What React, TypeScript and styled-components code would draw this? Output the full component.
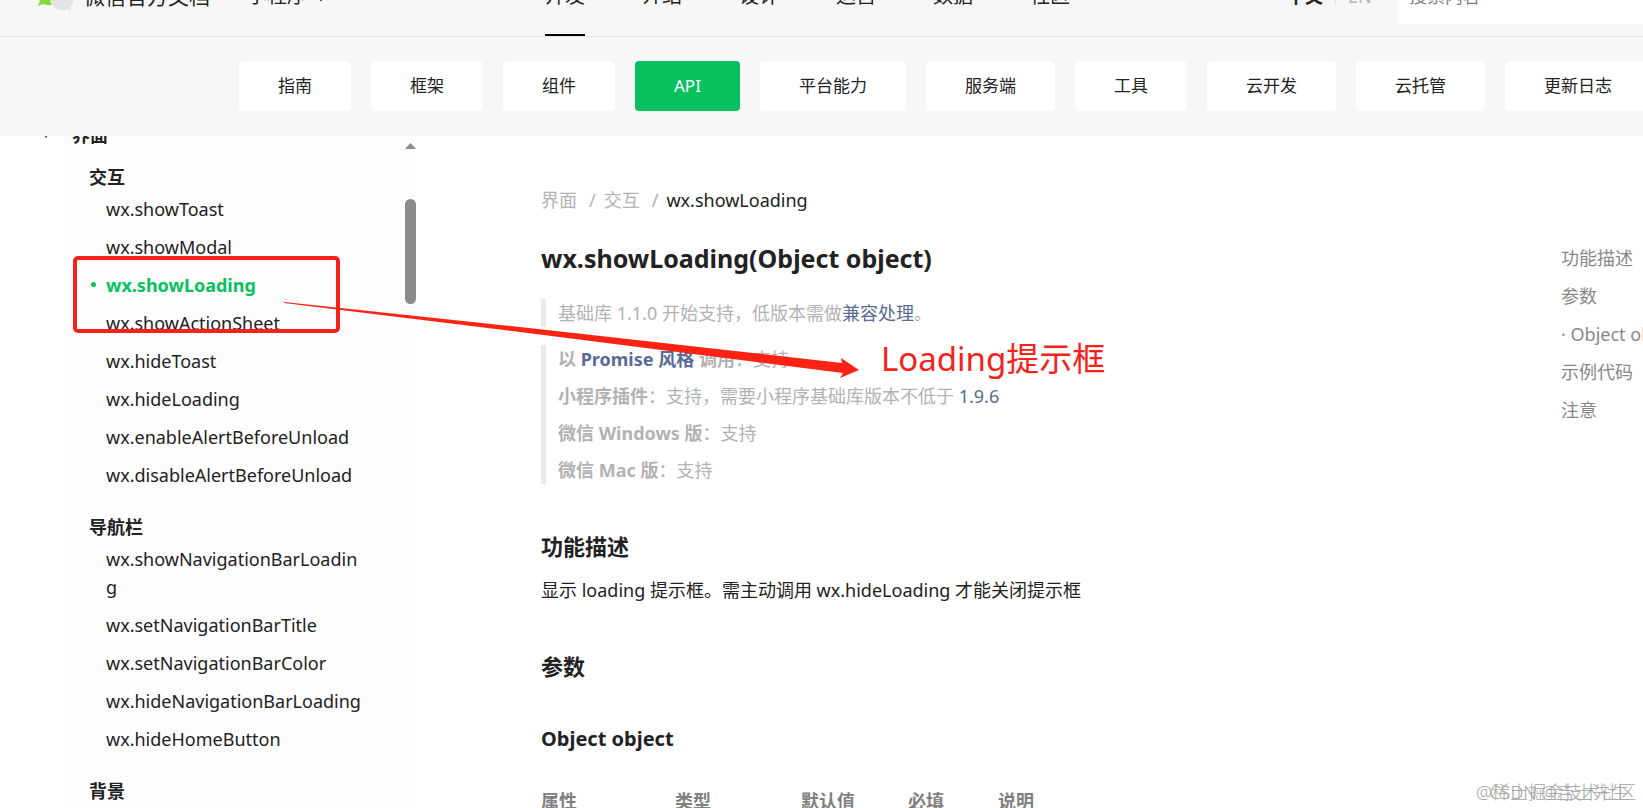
import React from 'react';
import styled, { createGlobalStyle } from 'styled-components';

const GlobalStyle = createGlobalStyle`
  * { box-sizing: border-box; }
  html, body, #root { height: 100%; }
  body {
    margin: 0;
    background: #fff;
    color: #222;
    font-family: "Noto Sans", "Noto Sans CJK SC", sans-serif;
    font-size: 18px;
    line-height: 28px;
    overflow: hidden;
  }
  a { color: inherit; text-decoration: none; }
  h1, h2, h3, p, ul { margin: 0; padding: 0; }
  ul { list-style: none; }
`;

const Page = styled.div`
  position: relative;
  display: flex;
  flex-direction: column;
  height: 100vh;
  overflow: hidden;
`;

const Header = styled.header`
  flex: none;
  display: flex;
  align-items: flex-end;
  height: 37px;
  overflow: hidden;
  background: #f7f7f7;
  border-bottom: 1px solid #e6e6e6;
`;

const HeaderRow = styled.div`
  flex: 1;
  display: flex;
  align-items: center;
  height: 80px;
  padding-left: 36px;
  font-size: 20px;
`;

const Brand = styled.a`
  display: flex;
  align-items: center;
  gap: 8px;
  width: 211px;
  font-size: 21px;
`;

const Product = styled.button`
  display: flex;
  align-items: center;
  gap: 8px;
  width: 298px;
  padding: 0;
  border: 0;
  background: none;
  color: inherit;
  font: inherit;
`;

const MainNav = styled.nav`
  display: flex;
  gap: 57px;
  width: 742px;
  height: 100%;
`;

const NavLink = styled.a<{ $active?: boolean }>`
  display: flex;
  align-items: center;
  border-bottom: 2px solid ${p => (p.$active ? '#000' : 'transparent')};
  border-top: 2px solid transparent;
`;

const Languages = styled.div`
  display: flex;
  align-items: center;
  gap: 12px;
  width: 110px;
  font-size: 18px;
  color: #b2b2b2;
`;

const Language = styled.a<{ $active?: boolean }>`
  font-weight: ${p => (p.$active ? 700 : 400)};
  color: ${p => (p.$active ? '#222' : '#b2b2b2')};
`;

const Separator = styled.span`
  width: 1px;
  height: 18px;
  background: #e2e2e2;
`;

const Search = styled.input`
  flex: 1;
  min-width: 0;
  height: 56px;
  padding: 0 12px;
  border: 0;
  border-radius: 4px;
  background: #fff;
  font: inherit;
  font-size: 18px;
  &::placeholder { color: #808080; opacity: 1; }
`;

const TabBar = styled.nav`
  flex: none;
  display: flex;
  gap: 20px;
  padding: 24px 0 25px 239px;
  overflow: hidden;
  background: #f7f7f7;
  font-size: 17px;
`;

const Tab = styled.a<{ $active?: boolean }>`
  flex: none;
  padding: 11px 39px;
  border-radius: 4px;
  background: ${p => (p.$active ? '#07c160' : '#fff')};
  color: ${p => (p.$active ? '#fff' : '#222')};
`;

const Body = styled.div`
  flex: 1;
  display: flex;
  min-height: 0;
  overflow: hidden;
`;

const Sidebar = styled.aside`
  flex: none;
  display: flex;
  justify-content: space-between;
  width: 352px;
  margin-left: 64px;
  background: #fdfdfd;
`;

const SideMenu = styled.div`
  width: 300px;
  margin-top: -15px;
  padding-left: 8px;
`;

const SideRoot = styled.h2`
  position: relative;
  font-size: 18px;
  line-height: 28px;
  svg {
    position: absolute;
    left: -30px;
    top: 9px;
  }
`;

const SideHeading = styled.h3`
  padding: 14px 0 4px 17px;
  font-size: 18px;
  line-height: 28px;
`;

const SideItem = styled.li<{ $active?: boolean }>`
  position: relative;
  margin-bottom: 10px;
  padding-left: 34px;
  word-break: break-all;
  font-weight: ${p => (p.$active ? 700 : 400)};
  color: ${p => (p.$active ? '#07c160' : '#222')};
  &::before {
    content: '';
    display: ${p => (p.$active ? 'block' : 'none')};
    position: absolute;
    left: 19px;
    top: 11px;
    width: 5px;
    height: 5px;
    border-radius: 50%;
    background: #07c160;
  }
`;

const ScrollTrack = styled.div`
  display: flex;
  flex-direction: column;
  align-items: center;
  width: 11px;
  padding-top: 7px;
`;

const ScrollThumb = styled.div`
  width: 11px;
  height: 105px;
  margin-top: 50px;
  border-radius: 6px;
  background: #8b8b8b;
`;

const Article = styled.main`
  flex: 1;
  min-width: 0;
  padding: 50px 0 0 125px;
`;

const Crumbs = styled.nav`
  display: flex;
  gap: 8px;
  color: #b2b2b2;
  strong { font-weight: 400; color: #222; }
  span { padding-left: 4px; }
`;

const Title = styled.h1`
  margin-top: 26px;
  font-size: 25px;
  line-height: 36px;
`;

const Quote = styled.blockquote<{ $gap: number }>`
  display: flex;
  flex-direction: column;
  gap: 9px;
  margin: ${p => p.$gap}px 0 0;
  padding-left: 12px;
  border-left: 5px solid #eaeaea;
  color: #b2b2b2;
  a { color: #576b95; }
`;

const SectionTitle = styled.h2`
  margin-top: 46px;
  font-size: 22px;
  line-height: 32px;
`;

const Paragraph = styled.p`
  margin: 14px 0 0;
`;

const SubTitle = styled.h3`
  margin-top: 43px;
  font-size: 20px;
  line-height: 28px;
`;

const ParamTable = styled.table`
  margin-top: 34px;
  border-collapse: collapse;
  color: #808080;
  th { padding: 0; text-align: left; font-weight: 700; }
`;

const Toc = styled.nav`
  flex: none;
  width: 82px;
  padding-top: 108px;
  display: flex;
  flex-direction: column;
  gap: 10px;
  white-space: nowrap;
  color: #888;
`;

const Marks = styled.svg`
  position: absolute;
  left: 0;
  top: 0;
  width: 900px;
  height: 400px;
  pointer-events: none;
`;

const Callout = styled.div`
  position: absolute;
  left: 881px;
  top: 335px;
  font-size: 33px;
  line-height: 48px;
  color: #f5221b;
`;

const Watermark = styled.div<{ $right: number }>`
  position: absolute;
  right: ${p => p.$right}px;
  bottom: 2px;
  font-size: 18px;
  font-weight: 300;
  color: #a4a4a4;
`;

const tabs = ['指南', '框架', '组件', 'API', '平台能力', '服务端', '工具', '云开发', '云托管', '更新日志'];
const nav = ['开发', '介绍', '设计', '运营', '数据', '社区'];
const groups = [
  {
    title: '交互',
    items: ['showToast', 'showModal', 'showLoading', 'showActionSheet', 'hideToast', 'hideLoading', 'enableAlertBeforeUnload', 'disableAlertBeforeUnload'],
  },
  {
    title: '导航栏',
    items: ['showNavigationBarLoading', 'setNavigationBarTitle', 'setNavigationBarColor', 'hideNavigationBarLoading', 'hideHomeButton'],
  },
  { title: '背景', items: [] },
];
const columns: [string, number][] = [['属性', 134], ['类型', 126], ['默认值', 107], ['必填', 90], ['说明', 90]];
const toc = ['功能描述', '参数', '· Object object', '示例代码', '注意'];

export default function App() {
  return (
    <Page>
      <GlobalStyle />
      <Header>
        <HeaderRow>
          <Brand href="#">
            <svg width="40" height="32" viewBox="0 0 40 32">
              <path d="M15 0C7 0 0 5 0 12c0 4 2 7 4 9L2 26l5-2c3 1 5 1 8 1 8 0 15-5 15-12S23 0 15 0z" fill="#82d93c" />
              <path d="M26 8c-7 0-12 5-12 11s5 11 12 11c2 0 4 0 5-1l4 2-1-4c2-2 4-5 4-8 0-6-5-11-12-11z" fill="#e3e4e8" />
            </svg>
            微信官方文档
          </Brand>
          <Product type="button">
            小程序
            <svg width="12" height="12" viewBox="0 0 12 12">
              <path d="M1 5l5 6 5-6" fill="none" stroke="#444" strokeWidth="1" />
            </svg>
          </Product>
          <MainNav>
            {nav.map((n, i) => <NavLink key={n} href="#" $active={i === 0}>{n}</NavLink>)}
          </MainNav>
          <Languages>
            <Language href="#" $active>中文</Language>
            <Separator />
            <Language href="#">EN</Language>
          </Languages>
          <Search type="search" aria-label="搜索内容" placeholder="搜索内容" />
        </HeaderRow>
      </Header>
      <TabBar>
        {tabs.map(t => <Tab key={t} href="#" $active={t === 'API'}>{t}</Tab>)}
      </TabBar>
      <Body>
        <Sidebar>
          <SideMenu>
            <SideRoot>
              <svg width="8" height="8" viewBox="0 0 8 8"><path d="M0 2h8L4 8z" fill="#444" /></svg>
              界面
            </SideRoot>
            {groups.map(g => (
              <section key={g.title}>
                <SideHeading>{g.title}</SideHeading>
                <ul>
                  {g.items.map(i => (
                    <SideItem key={i} $active={i === 'showLoading'}><a href="#">{'wx.' + i}</a></SideItem>
                  ))}
                </ul>
              </section>
            ))}
          </SideMenu>
          <ScrollTrack>
            <svg width="11" height="6" viewBox="0 0 11 6"><path d="M5.500 0L11 6H0z" fill="#8b8b8b" /></svg>
            <ScrollThumb />
          </ScrollTrack>
        </Sidebar>
        <Article>
          <Crumbs>
            <a href="#">界面</a><span>/</span><a href="#">交互</a><span>/</span><strong>wx.showLoading</strong>
          </Crumbs>
          <Title>wx.showLoading(Object object)</Title>
          <Quote $gap={23}>
            <p>基础库 1.1.0 开始支持，低版本需做<a href="#">兼容处理</a>。</p>
          </Quote>
          <Quote $gap={18}>
            <p><b>以 <a href="#">Promise 风格</a> 调用</b>：支持</p>
            <p><b>小程序插件</b>：支持，需要小程序基础库版本不低于 <a href="#">1.9.6</a></p>
            <p><b>微信 Windows 版</b>：支持</p>
            <p><b>微信 Mac 版</b>：支持</p>
          </Quote>
          <SectionTitle>功能描述</SectionTitle>
          <Paragraph>显示 loading 提示框。需主动调用 wx.hideLoading 才能关闭提示框</Paragraph>
          <SectionTitle>参数</SectionTitle>
          <SubTitle>Object object</SubTitle>
          <ParamTable>
            <colgroup>{columns.map(([c, w]) => <col key={c} width={w} />)}</colgroup>
            <thead><tr>{columns.map(([c]) => <th key={c} scope="col">{c}</th>)}</tr></thead>
          </ParamTable>
        </Article>
        <Toc>{toc.map(t => <a key={t} href="#">{t}</a>)}</Toc>
      </Body>
      <Marks viewBox="0 0 900 400">
        <rect x="75" y="258" width="263" height="73" rx="3" fill="none" stroke="#f5221b" strokeWidth="4" />
        <path d="M284 302L520 327L842 363L841 358L859 370L840 378L843 373L520 332L284 303z" fill="#fd2314" />
      </Marks>
      <Callout>Loading提示框</Callout>
      <Watermark $right={7}>@稀土掘金技术社区</Watermark>
      <Watermark $right={14}>CSDN @吉士先生</Watermark>
    </Page>
  );
}
